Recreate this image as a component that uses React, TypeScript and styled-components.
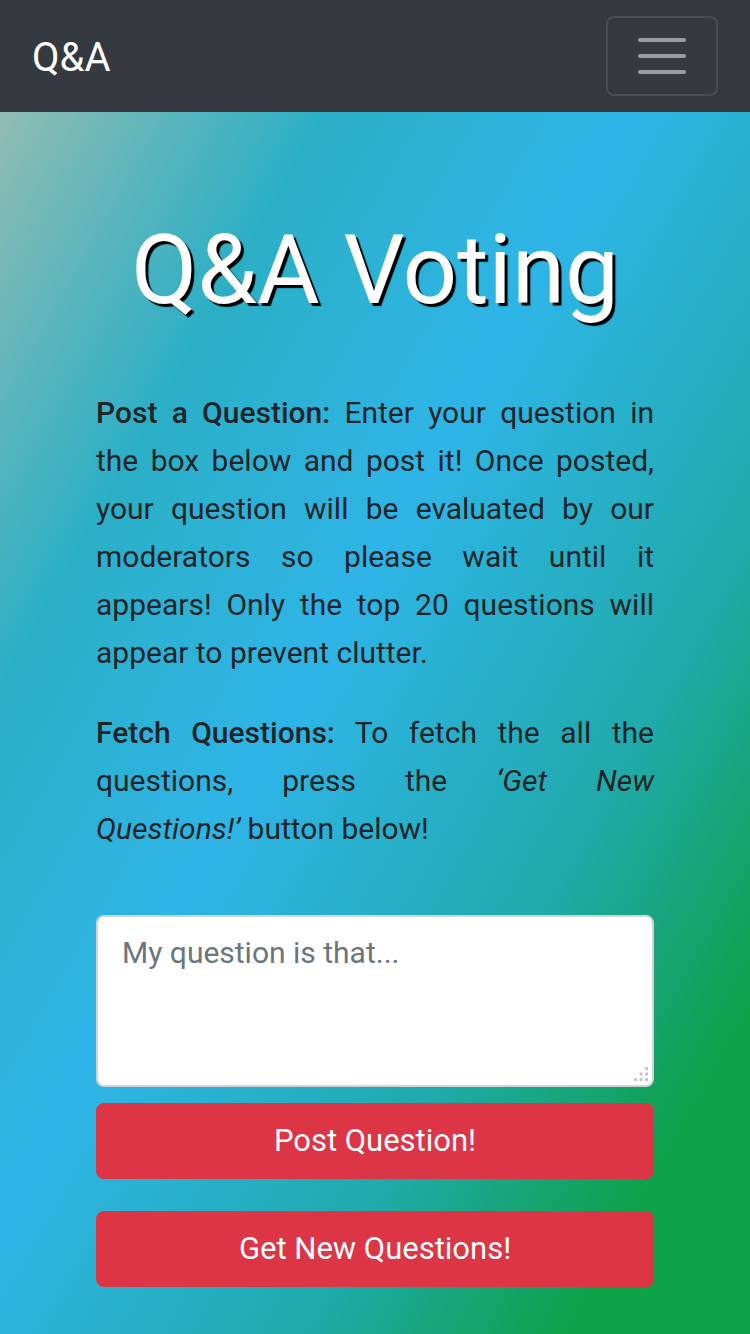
import React from "react";
import styled, { createGlobalStyle } from "styled-components";

const GlobalStyle = createGlobalStyle`
  html, body { margin: 0; padding: 0; }
  body {
    min-height: 100vh;
    font-family: Roboto, "Liberation Sans", Arial, sans-serif;
    color: #212529;
    background: linear-gradient(to bottom right,
      #a5bfae 0%,
      #2bafc6 26%,
      #2eb5e7 46%,
      #20aaab 70%,
      #0da149 88%,
      #0da149 100%);
    background-attachment: fixed;
  }
  * { box-sizing: border-box; }
`;

const Page = styled.div`
  min-height: 100vh;
  display: flex;
  flex-direction: column;
`;

const Navbar = styled.nav`
  height: 112px;
  background: #343a40;
  display: flex;
  align-items: center;
  justify-content: space-between;
  padding: 0 32px;
`;

const Brand = styled.a`
  color: #fff;
  font-size: 40px;
  line-height: 1;
  padding-top: 4px;
  text-decoration: none;
`;

const Toggler = styled.button`
  width: 112px;
  height: 80px;
  border: 2px solid rgba(255, 255, 255, 0.1);
  border-radius: 8px;
  background: transparent;
  padding: 8px 24px;
  display: flex;
  align-items: center;
  justify-content: center;
  cursor: pointer;
`;

const Main = styled.main`
  padding: 101px 96px 48px;
  display: flex;
  flex-direction: column;
`;

const Title = styled.h1`
  margin: 0 0 61px;
  text-align: center;
  color: #fff;
  font-weight: 400;
  font-size: 96px;
  line-height: 1.2;
  text-shadow: 3px 3px 1px #000;
`;

const Para = styled.p`
  margin: 0 0 32px;
  font-size: 30px;
  line-height: 48px;
  text-align: justify;
  &:last-of-type { margin-bottom: 62px; }
  b { font-weight: 500; }
  i { font-style: italic; }
`;

const Field = styled.div`
  position: relative;
`;

const TextArea = styled.textarea`
  display: block;
  width: 100%;
  height: 172px;
  border: 2px solid #ced4da;
  border-radius: 8px;
  padding: 12px 24px;
  font-family: Roboto, "Liberation Sans", Arial, sans-serif;
  font-size: 30px;
  line-height: 48px;
  color: #495057;
  background: #fff;
  resize: none;
  &::placeholder { color: #6c757d; opacity: 1; }
`;

const Grip = styled.svg`
  position: absolute;
  right: 5px;
  bottom: 5px;
  pointer-events: none;
`;

const Button = styled.button<{ $gap: number }>`
  display: block;
  width: 100%;
  margin-top: ${(p) => p.$gap}px;
  height: 76px;
  padding: 12px 32px;
  border: 2px solid #dc3545;
  border-radius: 8px;
  background: #dc3545;
  color: #fff;
  font-family: Roboto, "Liberation Sans", Arial, sans-serif;
  font-size: 31px;
  line-height: 48px;
  cursor: pointer;
`;

const MenuIcon = () => (
  <svg width="60" height="60" viewBox="0 0 30 30" aria-hidden="true">
    <path
      d="M4 7h22M4 15h22M4 23h22"
      stroke="rgba(255,255,255,0.5)"
      strokeWidth="2"
      strokeLinecap="round"
      strokeMiterlimit="10"
    />
  </svg>
);

const ResizeGrip = () => (
  <Grip width="16" height="16" viewBox="0 0 16 16" aria-hidden="true">
    <g fill="#c4c4c4">
      <rect x="12" y="1" width="3" height="3" rx="0.6" />
      <rect x="6.5" y="6.5" width="3" height="3" rx="0.6" />
      <rect x="12" y="6.5" width="3" height="3" rx="0.6" />
      <rect x="1" y="12" width="3" height="3" rx="0.6" />
      <rect x="6.5" y="12" width="3" height="3" rx="0.6" />
      <rect x="12" y="12" width="3" height="3" rx="0.6" />
    </g>
  </Grip>
);

export default function App() {
  return (
    <>
      <GlobalStyle />
      <Page>
        <Navbar>
          <Brand href="#">Q&amp;A</Brand>
          <Toggler aria-label="Toggle navigation">
            <MenuIcon />
          </Toggler>
        </Navbar>
        <Main>
          <Title>Q&amp;A Voting</Title>
          <Para>
            <b>Post a Question:</b> Enter your question in the{"\u00a0"}box below and post it! Once posted,
            your question will be evaluated by our moderators so please wait until it
            appears!{"\u00a0"}Only the top 20 questions will appear to prevent clutter.
          </Para>
          <Para>
            <b>Fetch Questions:</b> To fetch the all the questions, press the{" "}
            <i>‘Get New Questions!’</i>{"\u00a0"}button below!
          </Para>
          <Field>
            <TextArea placeholder="My question is that..." rows={3} />
            <ResizeGrip />
          </Field>
          <Button $gap={16}>Post Question!</Button>
          <Button $gap={32}>Get New Questions!</Button>
        </Main>
      </Page>
    </>
  );
}
